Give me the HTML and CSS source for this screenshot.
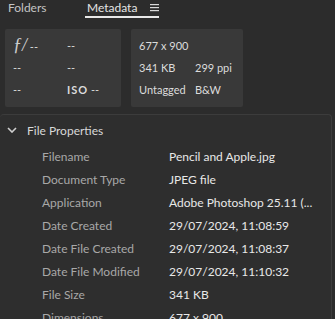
FILE: index.html
```html
<!DOCTYPE html>
<html lang="en">
<head>
    <meta charset="UTF-8">
    <title>Metadata</title>
    <link rel="stylesheet" href="styles.css">
</head>
<body>
    <div class="tabs">
        <span class="tab">Folders</span>
        <span class="tab active">Metadata
            <svg class="menu" width="9" height="8" viewBox="0 0 9 8">
                <rect x="0" y="0" width="9" height="1.2" fill="#d8d8d8"/>
                <rect x="0" y="3" width="9" height="1.2" fill="#d8d8d8"/>
                <rect x="0" y="6" width="9" height="1.2" fill="#d8d8d8"/>
            </svg>
        </span>
    </div>

    <div class="summary">
        <div class="card camera">
            <span><span class="fstop">ƒ/</span> --</span><span>--</span>
            <span>--</span><span>--</span>
            <span>--</span><span><b class="iso">ISO</b> --</span>
        </div>
        <div class="card image">
            <span>677 x 900</span><span></span>
            <span>341 KB</span><span>299 ppi</span>
            <span>Untagged</span><span>B&amp;W</span>
        </div>
    </div>

    <div class="section">
        <div class="section-head">
            <svg class="chevron" width="10" height="6" viewBox="0 0 10 6">
                <path d="M1 1 L5 5 L9 1" fill="none" stroke="#d0d0d0" stroke-width="1.6"/>
            </svg>
            File Properties
        </div>
        <div class="props">
            <div class="row"><span class="label">Filename</span><span class="value">Pencil and Apple.jpg</span></div>
            <div class="row"><span class="label">Document Type</span><span class="value">JPEG file</span></div>
            <div class="row"><span class="label">Application</span><span class="value">Adobe Photoshop 25.11 (...</span></div>
            <div class="row"><span class="label">Date Created</span><span class="value">29/07/2024, 11:08:59</span></div>
            <div class="row"><span class="label">Date File Created</span><span class="value">29/07/2024, 11:08:37</span></div>
            <div class="row"><span class="label">Date File Modified</span><span class="value">29/07/2024, 11:10:32</span></div>
            <div class="row"><span class="label">File Size</span><span class="value">341 KB</span></div>
            <div class="row"><span class="label">Dimensions</span><span class="value">677 x 900</span></div>
        </div>
    </div>
</body>
</html>
```

FILE: styles.css
```css
body {
    margin: 0;
    background-color: #2c2c2c;
    font-family: Lato, sans-serif;
    font-size: 12px;
    color: #e6e6e6;
    overflow: hidden;
}

/* Tab strip */
.tabs {
    display: flex;
    height: 18px;
    padding-left: 8px;
}

.tab {
    width: 77px;
    color: #c4c4c4;
    line-height: 15px;
}

.tab.active {
    display: flex;
    align-items: flex-start;
    gap: 13px;
    width: auto;
    color: #e4e4e4;
    padding: 0 0 0 2px;
    height: 16px;
    border-bottom: 2px solid #e8e8e8;
}

.menu {
    margin-top: 4px;
}

/* Summary cards */
.summary {
    display: flex;
    gap: 10px;
    padding: 11px 0 0 5px;
}

.card {
    display: grid;
    grid-auto-rows: 22px;
    align-items: center;
    background-color: #393939;
    border-radius: 2px;
    padding: 5px 0 7px 8px;
    font-size: 11px;
    color: #dcdcdc;
}

.camera {
    width: 108px;
    grid-template-columns: 54px 1fr;
}

.image {
    width: 104px;
    grid-template-columns: 56px 1fr;
}

.fstop {
    font-family: "Liberation Serif", serif;
    font-style: italic;
    font-size: 18px;
    color: #cfcfcf;
}

.iso {
    font-weight: bold;
    letter-spacing: 1px;
}

/* File properties section */
.section {
    margin-top: 7px;
    border-top: 1px solid #3c3c3c;
    border-right: 1px solid #3c3c3c;
    border-radius: 4px 4px 0 0;
    width: 331px;
    background-color: #2e2e2e;
}

.section-head {
    display: flex;
    align-items: center;
    height: 30px;
    padding-left: 7px;
    gap: 10px;
    color: #d8d8d8;
}

.row {
    display: flex;
    height: 23px;
    align-items: center;
}

.label {
    width: 127px;
    padding-left: 42px;
    color: #a8a8a8;
}

.value {
    color: #e8e8e8;
}
```
